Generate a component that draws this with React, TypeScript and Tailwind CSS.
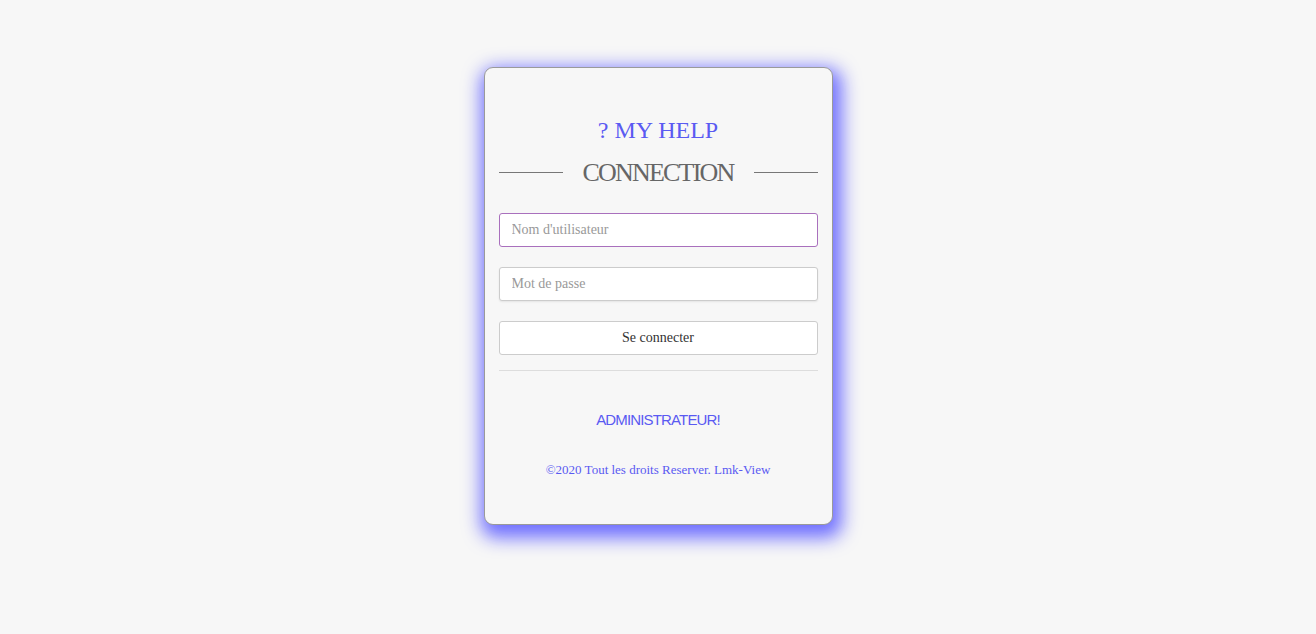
import React from "react";

export default function App() {
  return (
    <div
      className="min-h-screen w-full bg-[#f7f7f7] flex justify-center pt-[67px]"
      style={{ fontFamily: '"Liberation Serif", serif' }}
    >
      <div className="w-[349px] h-[458px] rounded-[9px] border border-[#9a9a9a] bg-[#f7f7f7] px-[14px] pt-[48px] shadow-[3px_7px_18px_6px_rgba(105,105,255,0.95)] flex flex-col">
        <h1 className="text-center text-[24px] leading-[29px] text-[#5a5af2] font-normal">
          ? MY HELP
        </h1>
        <div className="mt-[12px] flex items-center">
          <div className="flex-1 h-px bg-[#777]" />
          <h2 className="mx-[20px] text-[26px] leading-[31px] tracking-[-1.8px] text-[#666] font-normal">
            CONNECTION
          </h2>
          <div className="flex-1 h-px bg-[#777]" />
        </div>
        <form className="mt-[25px] flex flex-col gap-[20px]" onSubmit={(e) => e.preventDefault()}>
          <input
            type="text"
            placeholder="Nom d'utilisateur"
            className="h-[34px] w-full rounded-[3px] border border-[#a970bd] bg-white px-[12px] text-[14px] text-[#333] placeholder:text-[#999] outline-none"
            style={{ fontFamily: '"Liberation Serif", serif' }}
          />
          <input
            type="password"
            placeholder="Mot de passe"
            className="h-[34px] w-full rounded-[3px] border border-[#ccc] bg-white px-[12px] text-[14px] text-[#333] placeholder:text-[#999] outline-none shadow-[0_1px_2px_rgba(0,0,0,0.08)]"
            style={{ fontFamily: '"Liberation Serif", serif' }}
          />
          <button
            type="submit"
            className="h-[34px] w-full rounded-[3px] border border-[#ccc] bg-white pb-px text-[14px] text-[#333]"
            style={{ fontFamily: '"Liberation Serif", serif' }}
          >
            Se connecter
          </button>
        </form>
        <div className="mt-[15px] h-px bg-[#ddd]" />
        <a
          href="#"
          className="mt-[40px] block text-center text-[15px] leading-[18px] tracking-[-0.85px] text-[#5a5af2]"
          style={{ fontFamily: '"Liberation Sans", Arial, sans-serif' }}
        >
          ADMINISTRATEUR!
        </a>
        <p className="mt-[33px] text-center text-[13px] leading-[16px] text-[#5a5af2]">
          ©2020 Tout les droits Reserver. Lmk-View
        </p>
      </div>
    </div>
  );
}
